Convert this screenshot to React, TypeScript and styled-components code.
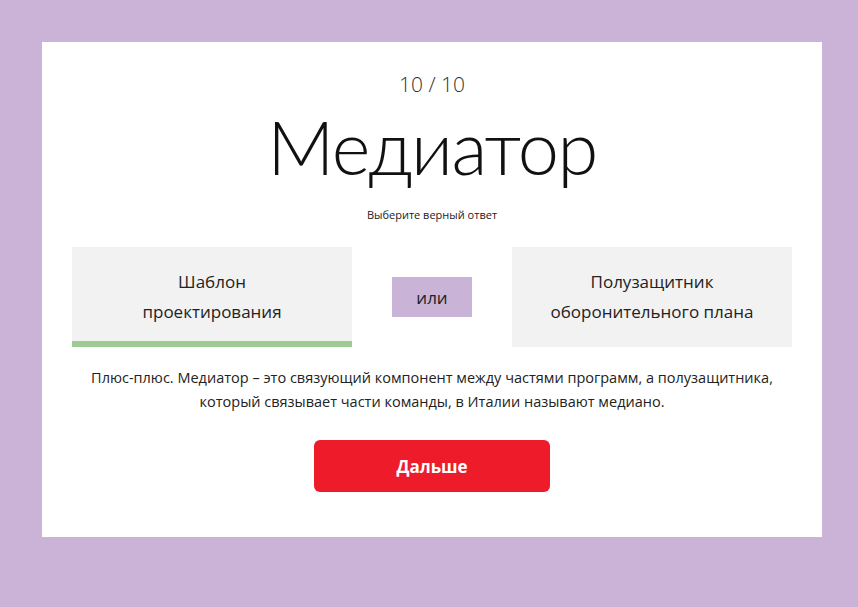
import React, { useState } from "react";
import styled, { createGlobalStyle } from "styled-components";

const GlobalStyle = createGlobalStyle`
  html, body {
    margin: 0;
    padding: 0;
    background: #cbb3d7;
    font-family: "Open Sans", "Noto Sans", sans-serif;
  }
`;

const Page = styled.div`
  min-height: 607px;
  padding: 42px 36px 70px 42px;
  box-sizing: border-box;
`;

const Card = styled.div`
  width: 780px;
  height: 495px;
  background: #fff;
  box-sizing: border-box;
  padding: 30px 30px 0;
  display: flex;
  flex-direction: column;
  align-items: center;
`;

const Counter = styled.div`
  font-size: 21px;
  font-weight: 300;
  color: #333;
  line-height: 24px;
`;

const Title = styled.h1`
  margin: 6px 0 0;
  font-family: "Lato", "Open Sans", sans-serif;
  font-size: 74px;
  font-weight: 300;
  line-height: 90px;
  letter-spacing: -1.5px;
  color: #111;
`;

const Hint = styled.div`
  margin-top: 15px;
  font-size: 11px;
  color: #222;
  line-height: 16px;
`;

const Choices = styled.div`
  margin-top: 24px;
  width: 100%;
  display: flex;
  align-items: center;
  gap: 40px;
`;

const Option = styled.button<{ correct?: boolean }>`
  width: 280px;
  height: 100px;
  border: none;
  background: #f2f2f2;
  box-sizing: border-box;
  border-bottom: 6px solid ${(p) => (p.correct ? "#9ccb94" : "#f2f2f2")};
  padding: 6px 20px 0;
  font-family: inherit;
  font-size: 17px;
  line-height: 30px;
  color: #222;
  cursor: pointer;
`;

const Or = styled.div`
  width: 80px;
  height: 40px;
  background: #c9b3d6;
  display: flex;
  align-items: center;
  justify-content: center;
  font-size: 17px;
  color: #222;
`;

const Explanation = styled.p`
  margin: 19px 0 0;
  text-align: center;
  font-size: 14.5px;
  line-height: 24px;
  color: #222;
`;

const NextButton = styled.button`
  margin-top: 26px;
  width: 236px;
  height: 52px;
  border: none;
  border-radius: 6px;
  background: #ee1c2b;
  color: #fff;
  font-family: inherit;
  font-size: 17px;
  font-weight: 700;
  cursor: pointer;
`;

const App = () => {
  const [picked] = useState(0);
  return (
    <>
      <GlobalStyle />
      <Page>
        <Card>
          <Counter>10 / 10</Counter>
          <Title>Медиатор</Title>
          <Hint>Выберите верный ответ</Hint>
          <Choices>
            <Option correct={picked === 0}>
              Шаблон
              <br />
              проектирования
            </Option>
            <Or>или</Or>
            <Option>
              Полузащитник
              <br />
              оборонительного плана
            </Option>
          </Choices>
          <Explanation>
            Плюс-плюс. Медиатор – это связующий компонент между частями программ, а полузащитника,
            <br />
            который связывает части команды, в Италии называют медиано.
          </Explanation>
          <NextButton>Дальше</NextButton>
        </Card>
      </Page>
    </>
  );
};

export default App;
